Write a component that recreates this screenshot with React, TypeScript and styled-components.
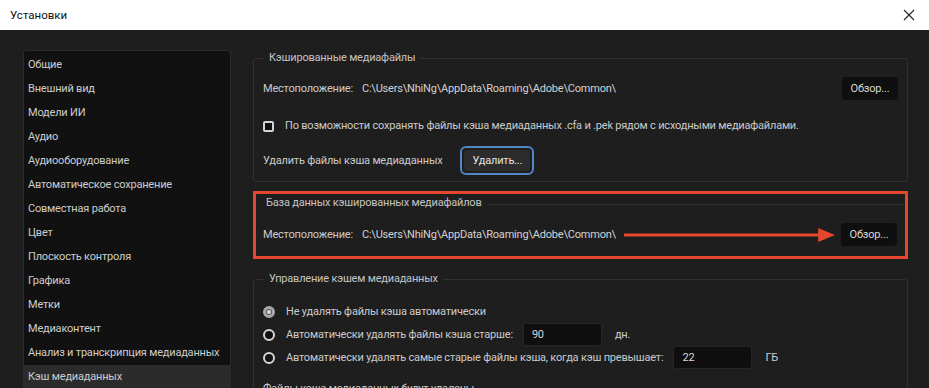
import React from "react";
import styled, { createGlobalStyle } from "styled-components";

const Global = createGlobalStyle`
  html, body { margin: 0; padding: 0; background: #1e1e1e; overflow: hidden; }
  body {
    font-family: Roboto, "Liberation Sans", sans-serif;
    font-size: 11px;
    letter-spacing: -0.2px;
    line-height: 16px;
    color: #cfcfcf;
  }
  * { box-sizing: border-box; }
`;

const Window = styled.div`
  width: 929px;
  height: 388px;
  display: flex;
  flex-direction: column;
  overflow: hidden;
  background: #1e1e1e;
`;

const TitleBar = styled.div`
  height: 30px;
  flex: none;
  background: #ffffff;
  display: flex;
  align-items: center;
  justify-content: space-between;
  padding: 0 10px 0 10px;
  color: #111;
  font-size: 11.5px;
  letter-spacing: 0;
`;

const CloseBtn = styled.div`
  width: 24px;
  height: 24px;
  display: flex;
  align-items: center;
  justify-content: center;
  margin-right: -2px;
`;

const Body = styled.div`
  flex: 1;
  display: flex;
  gap: 22px;
  padding: 20px 21px 0 23px;
  min-height: 0;
`;

const Sidebar = styled.div`
  width: 208px;
  flex: none;
  background: #111111;
  border: 1px solid #2a2a2a;
  border-bottom: none;
  border-radius: 3px 3px 0 0;
  padding-top: 2px;
  display: flex;
  flex-direction: column;
  height: 360px;
`;

const NavItem = styled.div<{ $active?: boolean }>`
  height: 24px;
  flex: none;
  display: flex;
  align-items: center;
  padding-left: 4px;
  color: #cdcdcd;
  white-space: nowrap;
  background: ${(p) => (p.$active ? "#2b2b2b" : "transparent")};
`;

const Content = styled.div`
  flex: 1;
  display: flex;
  flex-direction: column;
  min-width: 0;
`;

const Fieldset = styled.fieldset<{ $mt?: number }>`
  margin: ${(p) => p.$mt ?? 0}px 0 0 0;
  border: 1px solid #313131;
  border-radius: 3px;
  padding: 0 9px 6px 9px;
  min-width: 0;
`;

const Legend = styled.legend`
  padding: 0 5px 0 5px;
  margin-left: 1px;
  line-height: 16px;
  color: #c4c4c4;
`;

const Row = styled.div<{ $mt: number }>`
  display: flex;
  align-items: center;
  min-height: 16px;
  margin-top: ${(p) => p.$mt}px;
  white-space: nowrap;
`;

const Label = styled.span`
  color: #cbcbcb;
`;

const Path = styled.span`
  margin-left: 9px;
  color: #d2d2d2;
`;

const Spacer = styled.div`
  flex: 1;
`;

const BrowseButton = styled.div`
  width: 56px;
  height: 23px;
  flex: none;
  background: #0f0f0f;
  border-radius: 3px;
  display: flex;
  align-items: center;
  justify-content: center;
  color: #d8d8d8;
`;

const FocusRing = styled.div`
  margin-left: 18px;
  padding: 2px;
  border: 2px solid #4f86c6;
  border-radius: 6px;
  flex: none;
`;

const DeleteButton = styled.div`
  height: 21px;
  padding: 0 8px;
  background: #2c2c2c;
  border-radius: 3px;
  display: flex;
  align-items: center;
  color: #e4e4e4;
`;

const Checkbox = styled.div`
  width: 11px;
  height: 11px;
  border: 2px solid #d4d4d4;
  border-radius: 2px;
  background: #111;
  margin-right: 11px;
  flex: none;
`;

const RedFrame = styled.div`
  margin-top: 9px;
  border: 3px solid #e5462c;
  padding: 1px 1px 10px 7px;
  display: flex;
  flex-direction: column;
`;

const FrameHeader = styled.div`
  display: flex;
  align-items: center;
  height: 16px;
  padding-left: 3px;
  color: #c4c4c4;
  white-space: nowrap;
`;

const HeaderLine = styled.div`
  flex: 1;
  height: 1px;
  background: #333;
  margin-left: 6px;
  margin-top: 2px;
`;

const FrameRow = styled.div`
  display: flex;
  align-items: center;
  margin-top: 12px;
  padding-right: 7px;
  white-space: nowrap;
`;

const Arrow = styled.svg`
  flex: 1;
  height: 14px;
  margin: 0 6px 0 8px;
`;

const RadioRow = styled.div<{ $mt: number }>`
  display: flex;
  align-items: center;
  height: 23px;
  margin-top: ${(p) => p.$mt}px;
  white-space: nowrap;
`;

const Radio = styled.div<{ $checked?: boolean }>`
  width: 12px;
  height: 12px;
  border-radius: 50%;
  border: 2px solid ${(p) => (p.$checked ? "#a9a9a9" : "#d6d6d6")};
  background: ${(p) => (p.$checked ? "#a9a9a9" : "#111")};
  margin-right: 11px;
  flex: none;
  display: flex;
  align-items: center;
  justify-content: center;
  &::after {
    content: "";
    display: ${(p) => (p.$checked ? "block" : "none")};
    width: 4px;
    height: 4px;
    border-radius: 50%;
    background: #e0e0e0;
    box-shadow: 0 0 0 1px #555;
  }
`;

const NumberBox = styled.div<{ $ml: number }>`
  width: 79px;
  height: 23px;
  margin-left: ${(p) => p.$ml}px;
  background: #0e0e0e;
  border: 1px solid #262626;
  border-radius: 3px;
  display: flex;
  align-items: center;
  padding-left: 8px;
  color: #d6d6d6;
  flex: none;
`;

const Unit = styled.span<{ $ml: number }>`
  margin-left: ${(p) => p.$ml}px;
  color: #cfcfcf;
`;

const Footnote = styled.div`
  margin-top: 12px;
  color: #cbcbcb;
  white-space: nowrap;
`;

const navItems = [
  "Общие",
  "Внешний вид",
  "Модели ИИ",
  "Аудио",
  "Аудиооборудование",
  "Автоматическое сохранение",
  "Совместная работа",
  "Цвет",
  "Плоскость контроля",
  "Графика",
  "Метки",
  "Медиаконтент",
  "Анализ и транскрипция медиаданных",
  "Кэш медиаданных",
];

const PATH = "C:\\Users\\NhiNg\\AppData\\Roaming\\Adobe\\Common\\";

export default function App() {
  return (
    <>
      <Global />
      <Window>
        <TitleBar>
          <span>Установки</span>
          <CloseBtn>
            <svg width="12" height="12" viewBox="0 0 12 12">
              <path d="M1 1 L11 11 M11 1 L1 11" stroke="#222" strokeWidth="1.1" fill="none" />
            </svg>
          </CloseBtn>
        </TitleBar>
        <Body>
          <Sidebar>
            {navItems.map((n, i) => (
              <NavItem key={n} $active={i === navItems.length - 1}>
                {n}
              </NavItem>
            ))}
          </Sidebar>
          <Content>
            <Fieldset>
              <Legend>Кэшированные медиафайлы</Legend>
              <Row $mt={11}>
                <Label>Местоположение:</Label>
                <Path>{PATH}</Path>
                <Spacer />
                <BrowseButton>Обзор...</BrowseButton>
              </Row>
              <Row $mt={18}>
                <Checkbox />
                <Label>
                  По возможности сохранять файлы кэша медиаданных .cfa и .pek рядом с исходными медиафайлами.
                </Label>
              </Row>
              <Row $mt={12}>
                <Label>Удалить файлы кэша медиаданных</Label>
                <FocusRing>
                  <DeleteButton>Удалить...</DeleteButton>
                </FocusRing>
              </Row>
            </Fieldset>

            <RedFrame>
              <FrameHeader>
                <span>База данных кэшированных медиафайлов</span>
                <HeaderLine />
              </FrameHeader>
              <FrameRow>
                <Label>Местоположение:</Label>
                <Path>{PATH}</Path>
                <Arrow viewBox="0 0 200 14" preserveAspectRatio="none">
                  <rect x="0" y="5.5" width="186" height="3" fill="#e5462c" />
                  <polygon points="184,0 200,7 184,14" fill="#e5462c" />
                </Arrow>
                <BrowseButton>Обзор...</BrowseButton>
              </FrameRow>
            </RedFrame>

            <Fieldset $mt={12}>
              <Legend>Управление кэшем медиаданных</Legend>
              <RadioRow $mt={13}>
                <Radio $checked />
                <Label>Не удалять файлы кэша автоматически</Label>
              </RadioRow>
              <RadioRow $mt={0}>
                <Radio />
                <Label>Автоматически удалять файлы кэша старше:</Label>
                <NumberBox $ml={10}>90</NumberBox>
                <Unit $ml={13}>дн.</Unit>
              </RadioRow>
              <RadioRow $mt={0}>
                <Radio />
                <Label>Автоматически удалять самые старые файлы кэша, когда кэш превышает:</Label>
                <NumberBox $ml={10}>22</NumberBox>
                <Unit $ml={13}>ГБ</Unit>
              </RadioRow>
              <Footnote>Файлы кэша медиаданных будут удалены</Footnote>
            </Fieldset>
          </Content>
        </Body>
      </Window>
    </>
  );
}
